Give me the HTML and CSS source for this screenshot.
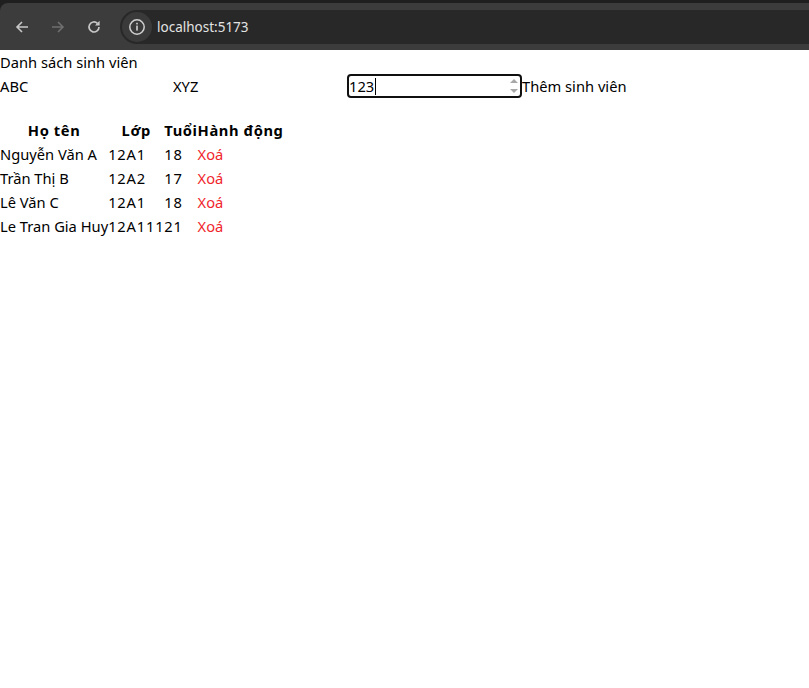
FILE: index.html
```html
<!DOCTYPE html>
<html lang="vi">
<head>
<meta charset="utf-8">
<title>Danh sách sinh viên</title>
<link rel="stylesheet" href="styles.css">
</head>
<body>
<div class="chrome">
  <div class="toolbar">
    <div class="navbtn">
      <svg width="16" height="16" viewBox="0 0 16 16"><path d="M14 8H3M8 3L3 8l5 5" fill="none" stroke="#c7c7c7" stroke-width="1.6"/></svg>
    </div>
    <div class="navbtn">
      <svg width="16" height="16" viewBox="0 0 16 16"><path d="M2 8h11M8 3l5 5-5 5" fill="none" stroke="#6f6f6f" stroke-width="1.6"/></svg>
    </div>
    <div class="navbtn">
      <svg width="16" height="16" viewBox="0 0 16 16"><path d="M13 8a5 5 0 1 1-1.6-3.7" fill="none" stroke="#c7c7c7" stroke-width="1.7"/><path d="M13.6 1.8v4.6H9z" fill="#c7c7c7"/></svg>
    </div>
    <div class="omnibox">
      <div class="infobtn">
        <svg width="18" height="18" viewBox="0 0 18 18"><circle cx="9" cy="9" r="7.2" fill="none" stroke="#d0d0d0" stroke-width="1.5"/><rect x="8.2" y="7.6" width="1.6" height="5" fill="#d0d0d0"/><rect x="8.2" y="4.8" width="1.6" height="1.6" fill="#d0d0d0"/></svg>
      </div>
      <span class="url">localhost:5173</span>
    </div>
  </div>
</div>
<main class="page">
  <div class="title">Danh sách sinh viên</div>
  <form class="addform">
    <input class="field" type="text" value="ABC">
    <input class="field" type="text" value="XYZ">
    <span class="numwrap">
      <input class="field num" type="text" value="123">
      <span class="caret"></span>
      <svg class="spin" width="10" height="18" viewBox="0 0 10 18"><path d="M1 6l4-4 4 4z" fill="#a8a8a8"/><path d="M1 12l4 4 4-4z" fill="#a8a8a8"/></svg>
    </span>
    <button class="addbtn" type="button">Thêm sinh viên</button>
  </form>
  <table class="list">
    <thead>
      <tr><th>Họ tên</th><th>Lớp</th><th>Tuổi</th><th>Hành động</th></tr>
    </thead>
    <tbody>
      <tr><td>Nguyễn Văn A</td><td class="num-cell">12A1</td><td class="num-cell">18</td><td><span class="del">Xoá</span></td></tr>
      <tr><td>Trần Thị B</td><td class="num-cell">12A2</td><td class="num-cell">17</td><td><span class="del">Xoá</span></td></tr>
      <tr><td>Lê Văn C</td><td class="num-cell">12A1</td><td class="num-cell">18</td><td><span class="del">Xoá</span></td></tr>
      <tr><td>Le Tran Gia Huy</td><td class="num-cell">12A111</td><td class="num-cell">21</td><td><span class="del">Xoá</span></td></tr>
    </tbody>
  </table>
</main>
</body>
</html>
```
FILE: styles.css
```css
html, body {
  margin: 0;
  padding: 0;
  background: #fff;
}
body {
  font-family: "Noto Sans", "Open Sans", sans-serif;
  font-size: 14.7px;
  line-height: 24px;
  color: #000;
}
.chrome {
  background: #1f1f1f;
  padding-top: 3px;
}
.toolbar {
  background: #3c3c3c;
  height: 47px;
  border-top-left-radius: 8px;
  display: flex;
  align-items: center;
  padding-left: 4px;
  box-sizing: border-box;
}
.navbtn {
  width: 36px;
  height: 34px;
  display: flex;
  align-items: center;
  justify-content: center;
}
.omnibox {
  margin-left: 8px;
  flex: 1;
  height: 34px;
  background: #282828;
  border-radius: 17px 0 0 17px;
  display: flex;
  align-items: center;
  padding-left: 2px;
}
.infobtn {
  width: 30px;
  height: 30px;
  border-radius: 50%;
  background: #3a3a3a;
  display: flex;
  align-items: center;
  justify-content: center;
}
.url {
  margin-left: 5px;
  font-family: "Noto Sans", sans-serif;
  font-size: 13.5px;
  color: #e3e3e3;
}
.title {
  height: 24px;
}
.addform {
  display: flex;
  align-items: center;
  height: 24px;
  margin: 0 0 20px 0;
}
.field {
  box-sizing: border-box;
  width: 173px;
  height: 24px;
  border: none;
  padding: 0;
  margin: 0;
  font: inherit;
  background: transparent;
  outline: none;
  color: #000;
}
.numwrap {
  position: relative;
  display: block;
  margin-left: 1px;
}
.field.num {
  width: 175px;
  border: 2px solid #101010;
  border-radius: 4px;
}
.caret {
  position: absolute;
  left: 28px;
  top: 4px;
  width: 1px;
  height: 17px;
  background: #000;
}
.spin {
  position: absolute;
  right: 3px;
  top: 3px;
}
.addbtn {
  font: inherit;
  border: none;
  background: none;
  padding: 0;
  margin: 0;
  color: #000;
}
.list {
  border-collapse: collapse;
  border-spacing: 0;
}
.list th, .list td {
  padding: 0;
  height: 24px;
}
.list th {
  font-weight: bold;
  text-align: center;
  letter-spacing: 0.6px;
}
.list td {
  text-align: left;
}
.list td.num-cell {
  letter-spacing: 0.8px;
}
.del {
  color: #f0262c;
}
```
